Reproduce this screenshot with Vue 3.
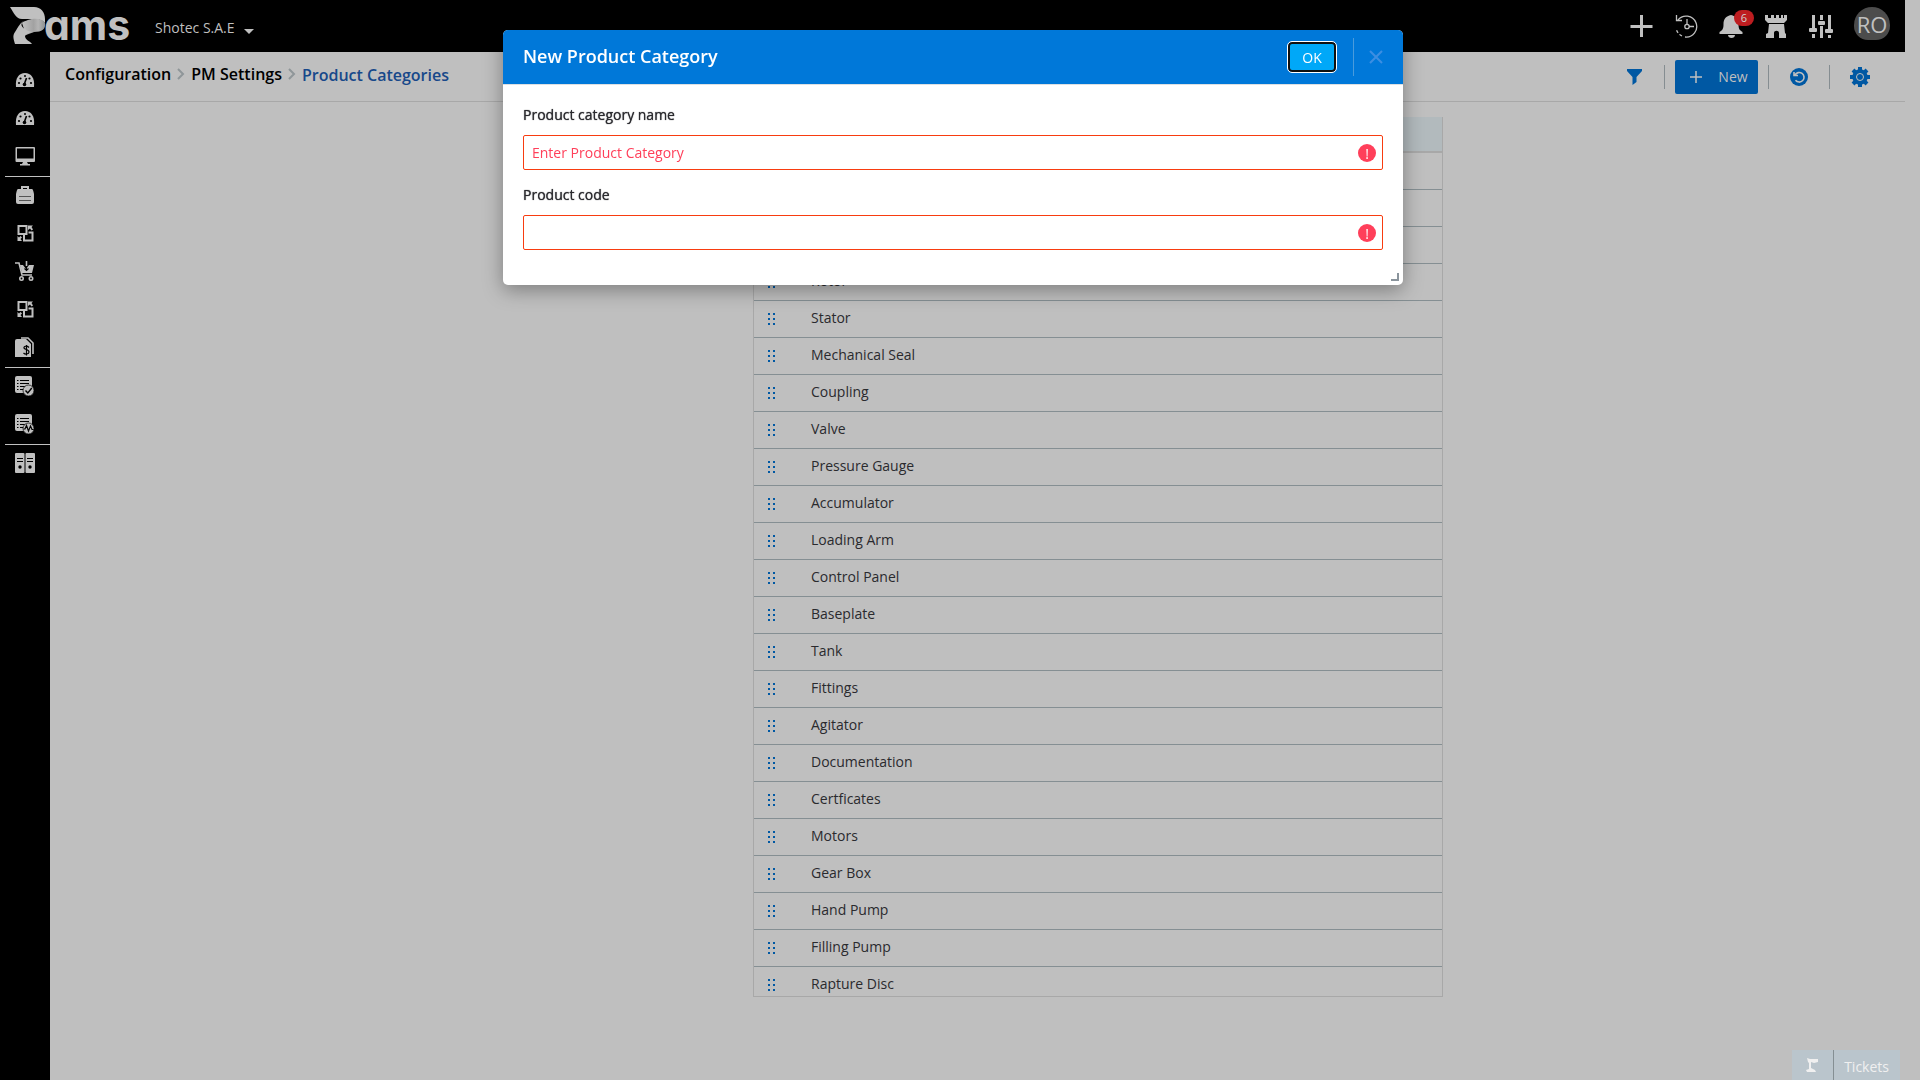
<script setup>
import { ref } from 'vue'

const menuGroups = [
    [
        { icon: 'gauge', label: 'Dashboard' },
        { icon: 'gauge', label: 'Overview' },
        { icon: 'desktop', label: 'Monitor' }
    ],
    [
        { icon: 'case', label: 'Jobs' },
        { icon: 'swap', label: 'Transfers' },
        { icon: 'cart', label: 'Purchasing' },
        { icon: 'swap', label: 'Exchanges' },
        { icon: 'bill', label: 'Invoices' }
    ],
    [
        { icon: 'listCheck', label: 'Tasks' },
        { icon: 'listPulse', label: 'Readings' }
    ],
    [{ icon: 'servers', label: 'Assets' }]
]

const categories = ref([
    '', '', '', 'Rotor', 'Stator', 'Mechanical Seal', 'Coupling', 'Valve',
    'Pressure Gauge', 'Accumulator', 'Loading Arm', 'Control Panel', 'Baseplate',
    'Tank', 'Fittings', 'Agitator', 'Documentation', 'Certficates', 'Motors',
    'Gear Box', 'Hand Pump', 'Filling Pump', 'Rapture Disc'
])

const dialogOpen = ref(true)
const categoryName = ref('')
const productCode = ref('')

function closeDialog() {
    dialogOpen.value = false
}

function openDialog() {
    dialogOpen.value = true
}
</script>

<template>
    <div class="app">
        <header class="topbar">
            <a href="#" class="logo" aria-label="Home">
                <svg width="38" height="40" viewBox="0 0 38 40">
                    <defs>
                        <linearGradient id="fold"><stop offset="0" stop-color="#c0c0c0" /><stop offset="0.5" stop-color="#a2a2a2" /><stop offset="0.7" stop-color="#b4b4b4" /><stop offset="1" stop-color="#8c9090" /></linearGradient>
                    </defs>
                    <path d="M0 1 H24 C31 1 35 6 35 13 V17 C32 14 29 13 24 13 H12 C6 13 4 7 0 1Z" fill="#c0c0c0" />
                    <path d="M12 17 C17 13 31 10 35 17 C36 23 32 26 24 26 L16 29Z" fill="url(#fold)" />
                    <path d="M14 15 C11 17 10 20 15 23 C17 25 20 26 24 26 C20 26 17 27 15 30 C15 34 20 35 22 38 H5 C4 34 2 30 5 26 C8 21 11 16 14 15Z" fill="#c0c0c0" />
                </svg>
                <span class="logo-text">ams</span>
            </a>
            <button type="button" class="company">
                Shotec S.A.E
                <span class="caret"></span>
            </button>
            <nav class="top-actions">
                <button type="button" aria-label="Add">
                    <svg width="24" height="24" viewBox="0 0 24 24"><path d="M12.500 1 V23 M1.500 12.500 H23.500" stroke="#c0c0c0" stroke-width="3" /></svg>
                </button>
                <button type="button" aria-label="History">
                    <svg width="24" height="24" viewBox="0 0 24 24" fill="none" stroke="#c0c0c0" stroke-width="1.3">
                        <path d="M4 6 A10.500 10.500 0 1 1 11 23" />
                        <path d="M8 22 A10.500 10.500 0 0 1 2.500 16" stroke-dasharray="3 2" />
                        <path d="M2.500 1 V6.500 H8 M13 5 V10 M15 12.500 H20" />
                        <circle cx="13" cy="12.500" r="2.200" />
                    </svg>
                </button>
                <button type="button" class="bell" aria-label="Notifications">
                    <svg width="24" height="24" viewBox="0 0 24 24" fill="#c0c0c0">
                        <path d="M12 1 C17 2 19.500 5 19.500 10 C19.500 15 20.500 16 23.500 18 V20 H0.500 V18 C4 16 4.500 14 4.500 10 C4.500 5 7 2 12 1Z" />
                        <path d="M9 21 H16 C16 25 9 25 9 21Z" />
                    </svg>
                    <span class="badge">6</span>
                </button>
                <button type="button" aria-label="Tower">
                    <svg width="24" height="24" viewBox="0 0 24 24" fill="#c0c0c0">
                        <path d="M1 1 H4 V4 H7 V1 H10 V4 H12 V1 H15 V4 H17 V1 H19 V4 H20 V1 H23 V6 L20 9 H4 L1 6Z" />
                        <path d="M5 10 H20 L21 19 L22 20 V24 H15 V19 C15 16 10 16 10 19 V24 H2 V20 L4 19Z" />
                    </svg>
                </button>
                <button type="button" aria-label="Settings">
                    <svg width="24" height="24" viewBox="0 0 24 24" fill="#c0c0c0">
                        <path d="M3 1 H6 V14 H3Z M3 20 H6 V24 H3Z M11 1 H14 V6 H11Z M11 12 H14 V24 H11Z M19 1 H22 V15 H19Z M19 21 H22 V24 H19Z" />
                        <rect x="0" y="14" width="8" height="4" rx="1" /><rect x="9" y="7" width="7" height="4" rx="1" /><rect x="16" y="15" width="8" height="4" rx="1" />
                    </svg>
                </button>
                <button type="button" class="avatar">RO</button>
            </nav>
        </header>

        <div class="body">
            <nav class="sidebar">
                <ul v-for="(group, g) in menuGroups" :key="g" class="menu-group">
                    <li v-for="item in group" :key="item.label">
                        <a href="#" :aria-label="item.label">
                            <svg width="20" height="20" viewBox="0 0 20 20">
                                <g v-if="item.icon === 'gauge'">
                                    <path d="M1 17 C0 8 4 3 10 3 C16 3 20 8 19 17Z" fill="#c0c0c0" />
                                    <path d="M9 15 L11.500 8" stroke="#000" stroke-width="1.6" />
                                    <circle cx="9.500" cy="14.500" r="1.800" />
                                    <circle cx="4" cy="13" r="1.100" /><circle cx="5.500" cy="8.500" r="1.100" /><circle cx="10" cy="6" r="1" /><circle cx="14.500" cy="8.500" r="1.100" /><circle cx="16" cy="13" r="1.100" />
                                </g>
                                <g v-else-if="item.icon === 'desktop'" fill="#c0c0c0">
                                    <path fill-rule="evenodd" d="M1.500 1 H19 Q20 1 20 2 V15 Q20 16 19 16 H1.500 Q0.500 16 0.500 15 V2 Q0.500 1 1.500 1Z M2 2.500 V12.500 H18.500 V2.500Z" />
                                    <path d="M8 16 H12 L13 18 H15 V19.500 H5 V18 H7Z" />
                                </g>
                                <g v-else-if="item.icon === 'case'">
                                    <path d="M7 4 V2 H13 V4" fill="none" stroke="#c0c0c0" stroke-width="2" />
                                    <path d="M3 4 H17 Q18 4 19 9 V17 Q19 19 17 19 H3 Q1 19 1 17 V9 Q2 4 3 4Z" fill="#c0c0c0" />
                                    <path d="M4 11.500 H16 M4 15.500 H16" stroke="#555" />
                                </g>
                                <g v-else-if="item.icon === 'swap'" fill="none" stroke="#c0c0c0" stroke-width="2">
                                    <path d="M3.500 3 H11.500 V11 H3.500Z M13.500 9.500 H17.500 V17.500 H9 V12" />
                                    <path d="M13 2.500 H18 L16.500 4 L18 6.500 L16.500 7.500 L15 5.500 L13 7Z M2.500 18 V13 L4 14.500 L5.500 13 L7 14.500 L5.500 16 L7 18Z" fill="#c0c0c0" stroke="none" />
                                </g>
                                <g v-else-if="item.icon === 'cart'" fill="none" stroke="#c0c0c0" stroke-width="1.6">
                                    <path d="M0 2 H4 L7 14 H17" />
                                    <path d="M5 4 H8 L11 8 L14 4 H19 L17 12 H7Z" fill="#c0c0c0" stroke="none" />
                                    <path d="M11.500 0 V5" stroke-width="1.600" />
                                    <path d="M11.500 5 V9 M9.500 7.500 L11.500 9.500 L13.500 7.500" stroke="#000" stroke-width="1.100" />
                                    <circle cx="6.500" cy="17.500" r="1.700" /><circle cx="16" cy="17.500" r="1.700" />
                                </g>
                                <g v-else-if="item.icon === 'bill'">
                                    <path d="M6 1 H13 L18 6 V17" fill="none" stroke="#c0c0c0" stroke-width="1.6" />
                                    <path d="M0 4 Q0 2 2 2 H11 L16 7 V20 H0Z" fill="#c0c0c0" />
                                    <path d="M14 10.500 C12 8.500 8.500 9 9 11 C9.500 13 14 12 14 15 C14 17.500 10 17.500 8.500 16 M11.500 8 V18.500" fill="none" stroke="#000" stroke-width="1.2" />
                                </g>
                                <g v-else-if="item.icon === 'servers'">
                                    <rect x="0" y="0" width="9.500" height="20" rx="1" fill="#c0c0c0" /><rect x="10.500" y="0" width="9.500" height="20" rx="1" fill="#c0c0c0" />
                                    <path d="M2 5.500 H8 M2 8.500 H8 M12 5.500 H18 M12 8.500 H18" stroke="#000" stroke-width="1.2" />
                                    <circle cx="5" cy="14" r="1.700" /><circle cx="15" cy="14" r="1.700" />
                                </g>
                                <g v-else>
                                    <rect x="0" y="0" width="17" height="17" rx="2" fill="#c0c0c0" />
                                    <path d="M5 4.500 H14 M5 7.500 H14 M5 10.500 H11 M5 13.500 H9 M2 4.500 H3.500 M2 7.500 H3.500 M2 10.500 H3.500 M2 13.500 H3.500" stroke="#000" />
                                    <circle cx="13.500" cy="14.500" r="5.500" fill="#c0c0c0" stroke="#000" stroke-width="0.7" />
                                    <path v-if="item.icon === 'listCheck'" d="M10.500 14.500 L12.800 17 L16.800 12" fill="none" stroke="#000" stroke-width="1.4" />
                                    <path v-else d="M8.500 15 H10 L11.500 11.500 L13.500 17 L15.500 12 L17 15.500 H18.500" fill="none" stroke="#000" stroke-width="1.2" />
                                </g>
                            </svg>
                        </a>
                    </li>
                </ul>
            </nav>

            <main class="content">
                <div class="toolbar">
                    <nav class="breadcrumb">
                        <a href="#">Configuration</a>
                        <svg width="8" height="12" viewBox="0 0 8 12"><path d="M1 1 L6 6 L1 11" /></svg>
                        <a href="#">PM Settings</a>
                        <svg width="8" height="12" viewBox="0 0 8 12"><path d="M1 1 L6 6 L1 11" /></svg>
                        <span class="current">Product Categories</span>
                    </nav>
                    <div class="tools">
                        <button type="button" aria-label="Filter">
                            <svg width="20" height="20" viewBox="0 0 20 20"><path d="M3 2 H18 V4 L12.500 10 V15 L8.500 18 V10 L3 4Z" fill="#0058a3" /></svg>
                        </button>
                        <span class="divider"></span>
                        <button type="button" class="new-btn" @click="openDialog">
                            <svg width="14" height="14" viewBox="0 0 14 14"><path d="M7 1 V13 M1 7 H13" stroke="#c0c0c0" stroke-width="1.5" /></svg>
                            New
                        </button>
                        <span class="divider"></span>
                        <button type="button" aria-label="Refresh">
                            <svg width="20" height="20" viewBox="0 0 20 20">
                                <circle cx="10" cy="10" r="9" fill="#0058a3" />
                                <path d="M6 8 A4.800 4.800 0 1 1 6.500 13.300 M5 5 V8.500 H9" fill="none" stroke="#bfbfbf" stroke-width="1.6" />
                            </svg>
                        </button>
                        <span class="divider"></span>
                        <button type="button" aria-label="Options">
                            <svg width="20" height="20" viewBox="0 0 20 20">
                                <circle cx="10" cy="10" r="7.700" fill="#0058a3" />
                                <path d="M10 0 V20 M0 10 H20 M3 3 L17 17 M17 3 L3 17" stroke="#0058a3" stroke-width="4" />
                                <circle cx="10" cy="10" r="3.500" fill="none" stroke="#bfbfbf" stroke-width="1" />
                            </svg>
                        </button>
                    </div>
                </div>

                <div class="grid-area">
                    <div class="panel">
                        <table>
                            <thead>
                                <tr><th></th><th></th></tr>
                            </thead>
                            <tbody>
                                <tr v-for="(name, i) in categories" :key="i">
                                    <td class="handle">
                                        <svg width="8" height="12" viewBox="0 0 8 12"><path d="M0 0h2v2H0z M5 0h2v2H5z M0 5h2v2H0z M5 5h2v2H5z M0 10h2v2H0z M5 10h2v2H5z" fill="#0058a3" /></svg>
                                    </td>
                                    <td class="name">{{ name }}</td>
                                </tr>
                            </tbody>
                        </table>
                    </div>
                </div>
            </main>
        </div>

        <div class="tickets">
            <button type="button" aria-label="Ticket tool">
                <svg width="13" height="15" viewBox="0 0 13 15" fill="#f0f0f0"><path d="M1 0 L4 1 L12 1 L12 4 L8 5 L5 4 L5 10 L9 12 L10 14 H1 L0 12 L3 11 L3 5 L2 4Z" /></svg>
            </button>
            <button type="button">Tickets</button>
        </div>

        <div v-if="dialogOpen" class="overlay">
            <form class="dialog" role="dialog" aria-labelledby="dialog-title" @submit.prevent="closeDialog">
                <div class="dialog-head">
                    <h2 id="dialog-title">New Product Category</h2>
                    <button type="submit" class="ok-btn">OK</button>
                    <span class="head-divider"></span>
                    <button type="button" class="close-btn" aria-label="Close" @click="closeDialog">
                        <svg width="14" height="14" viewBox="0 0 14 14"><path d="M1 1 L13 13 M13 1 L1 13" stroke="#3d8ee2" stroke-width="2" /></svg>
                    </button>
                </div>
                <div class="dialog-body">
                    <label for="category-name">Product category name</label>
                    <div class="field">
                        <input id="category-name" v-model="categoryName" type="text" placeholder="Enter Product Category">
                        <span class="invalid">!</span>
                    </div>
                    <label for="product-code">Product code</label>
                    <div class="field">
                        <input id="product-code" v-model="productCode" type="text">
                        <span class="invalid">!</span>
                    </div>
                </div>
                <span class="resize"></span>
            </form>
        </div>
    </div>
</template>

<style>
body {
    background-color: #bfbfbf;
}
</style>

<style scoped>
.app {
    display: flex;
    flex-direction: column;
    min-height: 100vh;
    margin-right: 15px;
    font-family: "Open Sans", "Noto Sans", sans-serif;
    font-size: 14px;
    color: #2a2a2e;
}

button {
    display: flex;
    align-items: center;
    justify-content: center;
    padding: 0;
    border: none;
    background: none;
    font: inherit;
    cursor: pointer;
}

a {
    color: inherit;
    text-decoration: none;
}

svg {
    display: block;
}

.topbar {
    display: flex;
    align-items: center;
    height: 52px;
    padding: 0 15px 0 10px;
    background-color: #000;
}

.logo {
    display: flex;
    align-items: center;
    width: 122px;
    color: #c0c0c0;
}

.logo svg {
    flex: none;
}

.logo-text {
    margin-left: -4px;
    padding-bottom: 2px;
    font-family: Inter, sans-serif;
    font-size: 41px;
    font-weight: 700;
    line-height: 50px;
    font-feature-settings: "cv11";
}

.company {
    gap: 9px;
    margin-left: 23px;
    padding-top: 4px;
    line-height: 20px;
    color: #bfbfbf;
}

.caret {
    margin-top: 6px;
    border: 5px solid transparent;
    border-top-color: #c0c0c0;
    border-bottom: none;
}

.top-actions {
    display: flex;
    align-items: center;
    gap: 21px;
    margin-left: auto;
}

.bell {
    position: relative;
}

.badge {
    position: absolute;
    top: -4px;
    left: 15px;
    width: 20px;
    border-radius: 8px;
    background-color: #bd1d20;
    color: #d0d0d0;
    font-size: 11px;
    line-height: 16px;
}

.avatar {
    align-items: flex-start;
    width: 36px;
    height: 33px;
    margin-top: -5px;
    border-radius: 18px 18px 14px 14px;
    background-color: #4c4c4c;
    color: #c0c0c0;
    font-size: 22px;
    line-height: 34px;
    overflow: hidden;
}

.body {
    display: flex;
    flex: 1;
}

.sidebar {
    width: 50px;
    padding-top: 10px;
    box-sizing: border-box;
    background-color: #000;
}

.menu-group {
    margin: 0 0 0 5px;
    padding: 0;
    list-style: none;
}

.menu-group + .menu-group {
    border-top: 1px solid #c0c0c0;
}

.menu-group a {
    display: flex;
    align-items: center;
    justify-content: center;
    height: 36px;
    padding: 0 5px 2px 0;
}

.content {
    flex: 1;
    min-width: 0;
}

.toolbar {
    display: flex;
    justify-content: space-between;
    height: 49px;
    padding: 0 35px 0 15px;
    border-bottom: 1px solid #a8a8a8;
}

.breadcrumb {
    display: flex;
    align-items: center;
    gap: 6px;
    height: 44px;
    font-size: 16px;
    font-weight: 600;
    color: #000;
}

.breadcrumb path {
    fill: none;
    stroke: #8f9699;
    stroke-width: 2;
}

.breadcrumb .current {
    padding-top: 2px;
    color: #17488a;
}

.tools {
    display: flex;
    align-items: center;
    gap: 20px;
}

.divider {
    width: 1px;
    height: 24px;
    background-color: #858d91;
}

.new-btn {
    gap: 15px;
    width: 83px;
    height: 34px;
    margin: 0 -10px;
    padding-left: 4px;
    border-radius: 2px;
    background-color: #0058a3;
    color: #bfbfbf;
}

.grid-area {
    display: grid;
    grid-template-columns: 703fr 690fr 462fr;
    padding-top: 15px;
}

.panel {
    grid-column: 2;
    height: calc(100vh - 200px);
    box-sizing: border-box;
    border: 1px solid #a8a8a8;
    border-top: none;
    overflow: hidden;
}

table {
    width: 100%;
    border-collapse: collapse;
}

th {
    height: 34px;
    padding: 0;
    border-bottom: 2px solid #a8a8a8;
    background-color: #b2babd;
}

td {
    height: 36px;
    padding: 0;
    border-bottom: 1px solid #858f93;
    line-height: 20px;
}

.handle {
    width: 43px;
    padding-left: 14px;
}

.name {
    height: 34px;
    padding-bottom: 2px;
}

.tickets {
    position: fixed;
    right: 20px;
    bottom: 0;
    display: flex;
    height: 30px;
    background-color: #bac5cc;
}

.tickets button {
    padding: 0 14px;
    color: #f0f0f0;
}

.tickets button + button {
    padding: 2px 11px 0 10px;
    border-left: 1px solid #858f93;
}

.overlay {
    position: fixed;
    inset: 0 14px 0 0;
    display: flex;
    align-items: flex-start;
    justify-content: center;
    padding-top: 30px;
}

.dialog {
    position: relative;
    width: 900px;
    max-width: 100%;
    border-radius: 5px;
    background-color: #fff;
    box-shadow: 0 5px 20px rgba(0, 0, 0, 0.35);
}

.dialog-head {
    display: flex;
    align-items: center;
    height: 54px;
    padding: 0 20px;
    border-bottom: 1px solid #dcdfe2;
    border-radius: 5px 5px 0 0;
    background-color: #0078d9;
    background-clip: padding-box;
}

h2 {
    flex: 1;
    margin: 0;
    padding-bottom: 2px;
    font-size: 18px;
    font-weight: 600;
    color: #fff;
}

.ok-btn {
    width: 48px;
    height: 30px;
    border: 2px solid #101010;
    border-radius: 4px;
    outline: 1px solid #fff;
    background-color: #00a8f8;
    color: #fff;
}

.head-divider {
    width: 1px;
    height: 38px;
    margin: 0 15px 0 17px;
    background-color: #4a9bdc;
}

.dialog-body {
    padding: 20px 20px 35px;
}

label {
    display: block;
    margin-bottom: 10px;
    line-height: 20px;
    text-shadow: 0 0 1px #2a2a2e;
}

.field {
    position: relative;
    margin-bottom: 15px;
}

.field:last-child {
    margin-bottom: 0;
}

input {
    display: block;
    width: 100%;
    height: 35px;
    padding: 0 40px 0 8px;
    box-sizing: border-box;
    border: 1px solid #f83c10;
    border-radius: 2px;
    outline: none;
    font: inherit;
}

input::placeholder {
    color: #ff3f5a;
    opacity: 1;
}

.invalid {
    position: absolute;
    top: 9px;
    right: 7px;
    width: 18px;
    height: 18px;
    border-radius: 50%;
    background-color: #ff3f5a;
    color: #fff;
    font-size: 14px;
    line-height: 20px;
    text-align: center;
}

.resize {
    position: absolute;
    right: 4px;
    bottom: 4px;
    width: 6px;
    height: 6px;
    border: solid #8a949c;
    border-width: 0 2px 2px 0;
}
</style>
